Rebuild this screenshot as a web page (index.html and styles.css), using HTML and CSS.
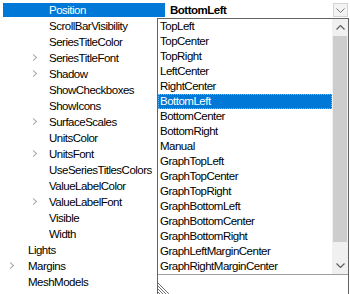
FILE: index.html
```html
<!DOCTYPE html>
<html><head>
<meta charset="UTF-8">
<link rel="stylesheet" href="styles.css">
</head><body>
<div class="grid">
	<div class="row">
		<div class="name sel l2">Position</div>
		<div class="value">BottomLeft
			<span class="combo"><svg width="9" height="5" viewBox="0 0 9 5"><polyline points="0.5,0.5 4.5,4.5 8.5,0.5" fill="none" stroke="#777" stroke-width="1"/></svg></span>
		</div>
	</div>
	<div class="row"><div class="name l2">ScrollBarVisibility</div></div>
	<div class="row"><div class="name l2">SeriesTitleColor</div></div>
	<div class="row"><div class="name l2"><i class="exp"></i>SeriesTitleFont</div></div>
	<div class="row"><div class="name l2"><i class="exp"></i>Shadow</div></div>
	<div class="row"><div class="name l2">ShowCheckboxes</div></div>
	<div class="row"><div class="name l2">ShowIcons</div></div>
	<div class="row"><div class="name l2"><i class="exp"></i>SurfaceScales</div></div>
	<div class="row"><div class="name l2">UnitsColor</div></div>
	<div class="row"><div class="name l2"><i class="exp"></i>UnitsFont</div></div>
	<div class="row"><div class="name l2">UseSeriesTitlesColors</div></div>
	<div class="row"><div class="name l2">ValueLabelColor</div></div>
	<div class="row"><div class="name l2"><i class="exp"></i>ValueLabelFont</div></div>
	<div class="row"><div class="name l2">Visible</div></div>
	<div class="row"><div class="name l2">Width</div></div>
	<div class="row"><div class="name l1">Lights</div></div>
	<div class="row"><div class="name l1"><i class="exp"></i>Margins</div></div>
	<div class="row"><div class="name l1">MeshModels</div></div>
</div>

<!-- the open drop-down of the Position editor -->
<div class="drop">
	<div class="body">
		<ul class="items">
			<li>TopLeft</li>
			<li>TopCenter</li>
			<li>TopRight</li>
			<li>LeftCenter</li>
			<li>RightCenter</li>
			<li class="cur">BottomLeft</li>
			<li>BottomCenter</li>
			<li>BottomRight</li>
			<li>Manual</li>
			<li>GraphTopLeft</li>
			<li>GraphTopCenter</li>
			<li>GraphTopRight</li>
			<li>GraphBottomLeft</li>
			<li>GraphBottomCenter</li>
			<li>GraphBottomRight</li>
			<li>GraphLeftMarginCenter</li>
			<li>GraphRightMarginCenter</li>
		</ul>
		<div class="vscroll">
			<div class="arrow"><svg width="9" height="5" viewBox="0 0 9 5"><polyline points="0.5,4.5 4.5,0.5 8.5,4.5" fill="none" stroke="#606060" stroke-width="1.2"/></svg></div>
			<div class="thumb"></div>
			<div class="track"></div>
			<div class="arrow"><svg width="9" height="5" viewBox="0 0 9 5"><polyline points="0.5,0.5 4.5,4.5 8.5,0.5" fill="none" stroke="#606060" stroke-width="1.2"/></svg></div>
		</div>
	</div>
	<div class="grip">
		<svg width="14" height="14" viewBox="0 0 14 14">
			<g stroke="#707070" stroke-width="1">
				<line x1="0" y1="2" x2="12" y2="14"/>
				<line x1="0" y1="5" x2="9" y2="14"/>
				<line x1="0" y1="8" x2="6" y2="14"/>
				<line x1="0" y1="11" x2="3" y2="14"/>
			</g>
		</svg>
	</div>
</div>
</body></html>
```
FILE: styles.css
```css
body {
	margin: 0;
	padding: 0;
	background: #fff;
	font-family: "Liberation Sans", Arial, sans-serif;
	font-size: 11.5px;
	letter-spacing: -0.5px;
	color: #000;
	overflow: hidden;
}

.grid {
	padding-top: 2px;
}

.row {
	height: 16px;
	display: flex;
	align-items: center;
}

.name {
	position: relative;
	width: 162px;
	height: 14px;
	line-height: 14px;
	margin-left: 3px;
	white-space: nowrap;
	box-sizing: border-box;
}
.name.l2 { padding-left: 46px; }
.name.l1 { padding-left: 25px; }

.name.sel {
	background: #0078d7;
	color: #fff;
}

/* expand chevron */
.exp {
	position: absolute;
	top: 4px;
	width: 4px;
	height: 4px;
	border-right: 1.5px solid #a8a8a8;
	border-bottom: 1.5px solid #a8a8a8;
	transform: rotate(-45deg);
}
.l2 .exp { left: 28px; }
.l1 .exp { left: 5px; }

.value {
	flex: 1;
	height: 14px;
	line-height: 14px;
	margin-left: 1px;
	margin-right: 2px;
	padding-left: 4px;
	font-weight: bold;
	display: flex;
	justify-content: space-between;
}

.combo {
	width: 15px;
	height: 14px;
	box-sizing: border-box;
	border: 1px solid #d4d4d4;
	background: #f3f3f3;
	display: flex;
	align-items: center;
	justify-content: center;
}

.drop {
	position: absolute;
	left: 157px;
	top: 18px;
	width: 192px;
	height: 280px;
	border: 1px solid #646464;
	box-sizing: border-box;
	background: #fff;
}

.body {
	display: flex;
}

.items {
	list-style: none;
	margin: 0;
	padding: 0;
	flex: 1;
}
.items li {
	height: 15px;
	line-height: 15px;
	padding-left: 2px;
	white-space: nowrap;
}
.items li.cur {
	background: #0078d7;
	color: #fff;
	outline: 1px dotted #7fb8ea;
	outline-offset: -1px;
}

.vscroll {
	width: 16px;
	display: flex;
	flex-direction: column;
	background: #f0f0f0;
}
.vscroll .arrow {
	height: 17px;
	display: flex;
	align-items: center;
	justify-content: center;
}
.vscroll .thumb {
	height: 206px;
	margin: 0 1px;
	background: #cdcdcd;
}
.vscroll .track {
	flex: 1;
}

.grip {
	height: 20px;
	border-top: 1px solid #a0a0a0;
	display: flex;
	align-items: flex-end;
}
.grip svg {
	display: block;
}
```
